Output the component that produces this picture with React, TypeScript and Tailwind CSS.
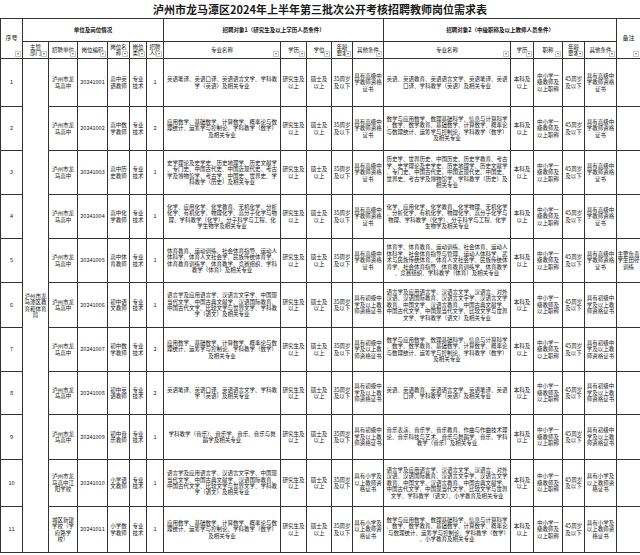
import type { ReactNode } from 'react'

const EN1 = '英语笔译、英语口译、英语语言文学、学科教学（英语）及相关专业'
const EN2 = '英语、英语教育、英语语言文学、英语笔译、英语口译、学科教学（英语）及相关专业'
const MA1 = '应用数学、基础数学、计算数学、概率论与数理统计、运筹学与控制论、学科教学（数学）及相关专业'
const MA2 = '数学与应用数学、数理基础科学、信息与计算科学、数学、数学教育、基础数学、计算数学、概率论与数理统计、运筹学与控制论、学科教学（数学）及相关专业'
const MA2P = '数学与应用数学、数理基础科学、信息与计算科学、数学、数学教育、基础数学、计算数学、概率论与数理统计、运筹学与控制论、学科教学（数学）、小学教育及相关专业'
const HI1 = '史学理论及史学史、历史地理学、历史文献学、专门史、中国古代史、中国近现代史、考古学及博物馆学、考古学、中国史、世界史、学科教学（历史）及相关专业'
const HI2 = '历史学、世界历史、中国历史、历史学教育、考古学、史学理论及史学史、历史地理学、历史文献学、专门史、中国古代史、中国近现代史、中国史、世界史、考古学及博物馆学、学科教学（历史）及相关专业'
const CH1 = '化学、应用化学、化学教育、无机化学、分析化学、有机化学、物理化学、高分子化学与物理、学科教学（化学）、分子科学与工程、化学生物学及相关专业'
const CH2 = '化学、应用化学、化学教育、化学物理、无机化学、分析化学、有机化学、物理化学、高分子化学与物理、学科教学（化学）、分子科学与工程、化学生物学及相关专业'
const PE1 = '体育教育、运动训练、社会体育指导、运动人体科学、体育人文社会学、民族传统体育学、体育教育训练学、体育教学、竞赛组织、学科教学（体育）及相关专业'
const PE2 = '体育学、体育教育、运动训练、社会体育、运动人体科学、社会体育指导与管理、运动人体科学、武术与民族传统体育、体育人文社会学、民族传统体育学、社会体育指导、体育教育训练学、体育教学、竞赛组织、学科教学（体育）及相关专业'
const CN1 = '语言学及应用语言学、汉语言文字学、中国现当代文学、中国古典文献学、汉语国际教育、中国古代文学、比较文学与世界文学、学科教学（语文）及相关专业'
const CN2 = '语言学及应用语言学、汉语言文学、汉语言、对外汉语、汉语国际教育、汉语言文字学、汉语言文学教育、中国文学、汉语言教育、中国古典文献学、中国古代文学、中国现当代文学、比较文学与世界文学、学科教学（语文）及相关专业'
const CN2P = '语言学及应用语言学、汉语言文学、汉语言、对外汉语、汉语国际教育、汉语言文字学、汉语言文学教育、中国文学、汉语言教育、中国古典文献学、中国古代文学、中国现当代文学、比较文学与世界文学、学科教学（语文）、小学教育及相关专业'
const MU1 = '学科教学（音乐）、音乐学、音乐、音乐与舞蹈学及相关专业'
const MU2 = '音乐表演、音乐学、音乐教育、作曲与作曲技术理论、音乐科技与艺术、音乐与舞蹈学、音乐、学科教学（音乐）及相关专业'

const HS = '具有高级中\n学教师资格\n证书'
const JS = '具有初级中\n学及以上教\n师资格证书'
const PS = '具有小学及\n以上教师资\n格证书'
const LH = '泸州市龙\n马高中'

const rows = [
  { no: 1, unit: LH, code: '20241001', post: '高中英\n语教师', num: 1, major1: EN1, other1: HS, major2: EN2, other2: HS, note: '', height: 'h-[48px]' },
  { no: 2, unit: LH, code: '20241002', post: '高中数\n学教师', num: 2, major1: MA1, other1: HS, major2: MA2, other2: HS, note: '', height: 'h-[44px]' },
  { no: 3, unit: LH, code: '20241003', post: '高中历\n史教师', num: 1, major1: HI1, other1: HS, major2: HI2, other2: HS, note: '', height: 'h-[44px]' },
  { no: 4, unit: LH, code: '20241004', post: '高中化\n学教师', num: 1, major1: CH1, other1: HS, major2: CH2, other2: HS, note: '', height: 'h-[44px]' },
  { no: 5, unit: LH, code: '20241005', post: '高中体\n育教师', num: 1, major1: PE1, other1: HS, major2: PE2, other2: HS, note: '主要负责\n学生田径\n训练', height: 'h-[44px]' },
  { no: 6, unit: LH, code: '20241006', post: '初中语\n文教师', num: 1, major1: CN1, other1: JS, major2: CN2, other2: JS, note: '', height: 'h-[45px]' },
  { no: 7, unit: LH, code: '20241007', post: '初中数\n学教师', num: 2, major1: MA1, other1: JS, major2: MA2, other2: JS, note: '', height: 'h-[44px]' },
  { no: 8, unit: LH, code: '20241008', post: '初中英\n语教师', num: 2, major1: EN1, other1: JS, major2: EN2, other2: JS, note: '', height: 'h-[43px]' },
  { no: 9, unit: LH, code: '20241009', post: '初中音\n乐教师', num: 1, major1: MU1, other1: JS, major2: MU2, other2: JS, note: '', height: 'h-[45px]' },
  { no: 10, unit: '泸州市龙\n马高中江\n阳学校', code: '20241010', post: '小学语\n文教师', num: 1, major1: CN1, other1: PS, major2: CN2P, other2: PS, note: '', height: 'h-[47px]' },
  { no: 11, unit: '城区新建\n学校（学\n府路学\n校）', code: '20241011', post: '小学数\n学教师', num: 1, major1: MA1, other1: PS, major2: MA2P, other2: PS, note: '', height: 'h-[46px]' },
]

const widths = [
  'w-[22px]', 'w-[26px]', 'w-[29px]', 'w-[30px]', 'w-[22px]', 'w-[17px]', 'w-[17px]', 'w-[117px]', 'w-[26px]',
  'w-[25px]', 'w-[21px]', 'w-[31px]', 'w-[127px]', 'w-[23px]', 'w-[29px]', 'w-[22px]', 'w-[32px]', 'w-[24px]',
]

const subHeads = [
  '主管\n部门', '招聘单位', '岗位编码', '岗位名\n称', '岗位\n类别', '招聘\n人数', '专业名称', '学历', '学位', '年龄\n要求', '其他条件',
  '专业名称', '学历', '职称', '年龄\n要求', '其他条件',
]

function Filter() {
  return (
    <span className="absolute right-[1px] bottom-[1px] flex h-[6px] w-[6px] items-center justify-center border border-[#c8c8c8] bg-white">
      <span className="h-0 w-0 border-x-[1.5px] border-t-[2px] border-x-transparent border-t-[#3d7a3d]" />
    </span>
  )
}

function Cell({ children, className = '', rowSpan, colSpan }: { children?: ReactNode; className?: string; rowSpan?: number; colSpan?: number }) {
  return (
    <td
      rowSpan={rowSpan}
      colSpan={colSpan}
      className={`border border-[#333] text-center align-middle whitespace-pre-line [line-break:anywhere] ${className}`}
    >
      {children}
    </td>
  )
}

export default function App() {
  return (
    <div className="h-[555px] w-[640px] overflow-hidden bg-white text-[5.5px] leading-[6.4px] text-[#111] font-['Noto_Sans_CJK_SC',sans-serif]">
      <div className="flex h-[18px] items-center justify-center pt-[1px] text-[11px] leading-none font-bold text-[#1a1a1a]">
        泸州市龙马潭区2024年上半年第三批次公开考核招聘教师岗位需求表
      </div>

      <table className="w-[640px] table-fixed border-collapse">
        <colgroup>
          {widths.map((w, i) => (
            <col key={i} className={w} />
          ))}
        </colgroup>
        <thead>
          <tr className="h-[23px]">
            <Cell rowSpan={2} className="relative text-[6px]">
              序号
              <Filter />
            </Cell>
            <Cell colSpan={6} className="font-bold">单位及岗位情况</Cell>
            <Cell colSpan={5} className="font-bold">招聘对象1（研究生及以上学历人员条件）</Cell>
            <Cell colSpan={5} className="font-bold">招聘对象2（中级职称及以上教师人员条件）</Cell>
            <Cell rowSpan={2} className="relative text-[6px]">
              备注
              <Filter />
            </Cell>
          </tr>
          <tr className="h-[17px]">
            {subHeads.map((label, i) => (
              <Cell key={i} className="relative font-normal">
                <div className="flex h-[13px] items-center justify-center overflow-hidden">{label}</div>
                <Filter />
              </Cell>
            ))}
          </tr>
        </thead>
        <tbody>
          {rows.map((r, i) => (
            <tr key={r.no} className={r.height}>
              <Cell>{r.no}</Cell>
              {i === 0 && <Cell rowSpan={11}>{'泸州市龙\n马潭区教\n育和体育\n局'}</Cell>}
              <Cell>{r.unit}</Cell>
              <Cell>{r.code}</Cell>
              <Cell>{r.post}</Cell>
              <Cell>{'专业\n技术'}</Cell>
              <Cell>{r.num}</Cell>
              <Cell className="px-[2px]">{r.major1}</Cell>
              <Cell>{'研究生及\n以上'}</Cell>
              <Cell>{'硕士及\n以上'}</Cell>
              <Cell>{'35周岁\n及以下'}</Cell>
              <Cell>{r.other1}</Cell>
              <Cell className="px-[2px]">{r.major2}</Cell>
              <Cell>{'本科及\n以上'}</Cell>
              <Cell>{'中小学一\n级教师及\n以上职称'}</Cell>
              <Cell>{'45周岁\n及以下'}</Cell>
              <Cell>{r.other2}</Cell>
              <Cell>{r.note}</Cell>
            </tr>
          ))}
        </tbody>
      </table>
    </div>
  )
}
